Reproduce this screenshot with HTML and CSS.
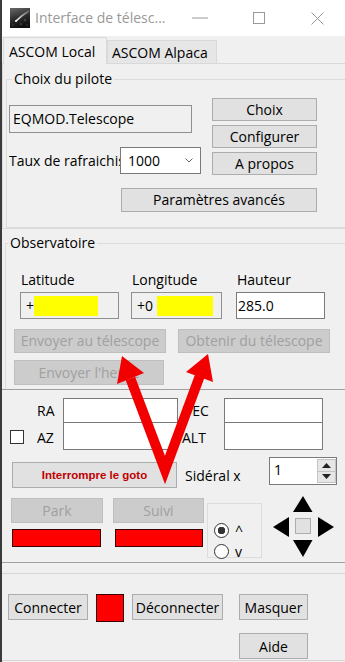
FILE: index.html
```html
<!DOCTYPE html>
<html lang="fr">
<head>
  <meta charset="UTF-8">
  <title>Interface de télescope</title>
  <link rel="stylesheet" href="styles.css">
</head>
<body>
  <div class="titlebar">
    <svg class="app-icon" viewBox="0 0 20 20">
      <defs>
        <linearGradient id="sky" x1="0" y1="0" x2="0.3" y2="1">
          <stop offset="0" stop-color="#6a6a6a"/>
          <stop offset="0.6" stop-color="#2a2a2a"/>
          <stop offset="1" stop-color="#111"/>
        </linearGradient>
        <linearGradient id="tail" x1="1" y1="0" x2="0" y2="1">
          <stop offset="0" stop-color="#fff" stop-opacity="0.2"/>
          <stop offset="1" stop-color="#fff" stop-opacity="1"/>
        </linearGradient>
      </defs>
      <rect width="20" height="20" fill="url(#sky)"/>
      <path d="M19 3 Q12 7 6 13" stroke="url(#tail)" stroke-width="1.6" fill="none"/>
      <circle cx="6" cy="13" r="1" fill="#fff"/>
      <circle cx="15" cy="12" r="0.5" fill="#ddd"/>
      <circle cx="11" cy="16" r="0.5" fill="#ccc"/>
      <circle cx="3" cy="17" r="0.4" fill="#bbb"/>
      <circle cx="17" cy="17" r="0.4" fill="#bbb"/>
    </svg>
    <span class="title">Interface de télesc...</span>
    <div class="caption">
      <span><svg width="16" height="2"><rect y="0.5" width="16" height="1" fill="#999"/></svg></span>
      <span><svg width="12" height="12"><rect x="0.5" y="0.5" width="11" height="11" fill="none" stroke="#999"/></svg></span>
      <span><svg width="13" height="13"><path d="M0.5 0.5 L12.5 12.5 M12.5 0.5 L0.5 12.5" stroke="#999"/></svg></span>
    </div>
  </div>

  <div class="tabs">
    <div class="tab active">ASCOM Local</div>
    <div class="tab">ASCOM Alpaca</div>
  </div>

  <div class="pane">
    <fieldset class="group pilote">
      <legend>Choix du pilote</legend>
      <div class="pilote-grid">
        <div>
          <div class="field ro driver">EQMOD.Telescope</div>
          <div class="rate-row">
            <span class="rate-label">Taux de rafraichis</span>
            <div class="combo">
              <span>1000</span>
              <svg width="8" height="5"><path d="M0.5 0.5 L4 4 L7.5 0.5" stroke="#666" fill="none"/></svg>
            </div>
          </div>
        </div>
        <div class="pilote-btns">
          <button class="btn">Choix</button>
          <button class="btn">Configurer</button>
          <button class="btn">A propos</button>
        </div>
      </div>
      <button class="btn advanced">Paramètres avancés</button>
    </fieldset>
  </div>

  <fieldset class="group obs">
    <legend>Observatoire</legend>
    <div class="obs-grid">
      <span class="obs-label">Latitude</span>
      <span class="obs-label">Longitude</span>
      <span class="obs-label">Hauteur</span>
      <div class="field ro lat">+<span class="mask lat-mask"></span></div>
      <div class="field ro lon">+0<span class="mask lon-mask"></span></div>
      <div class="field alt-box">285.0</div>
    </div>
    <div class="send-row">
      <button class="btn off">Envoyer au télescope</button>
      <button class="btn off">Obtenir du télescope</button>
    </div>
    <button class="btn off heure">Envoyer l'heure</button>
  </fieldset>

  <div class="lower">
    <div class="coords">
      <span></span>
      <span class="c-label ra">RA</span>
      <div class="field coord top"></div>
      <span class="c-label dec">DEC</span>
      <div class="field coord top"></div>
      <span class="check"></span>
      <span class="c-label ra">AZ</span>
      <div class="field coord bottom"></div>
      <span class="c-label dec">ALT</span>
      <div class="field coord bottom"></div>
    </div>

    <div class="goto-row">
      <button class="btn stop">Interrompre le goto</button>
      <span class="sideral">Sidéral x</span>
      <div class="spin">
        <span class="spin-val">1</span>
        <div class="spin-btns">
          <span><svg width="9" height="5"><path d="M0 5 L4.5 0 L9 5 Z" fill="#222"/></svg></span>
          <span><svg width="9" height="5"><path d="M0 0 L4.5 5 L9 0 Z" fill="#222"/></svg></span>
        </div>
      </div>
    </div>

    <div class="ctl-row">
      <div class="state park">
        <button class="btn off">Park</button>
        <span class="led"></span>
      </div>
      <div class="state suivi">
        <button class="btn off">Suivi</button>
        <span class="led"></span>
      </div>
      <div class="radios">
        <div class="radio-row"><span class="radio checked"></span><span>^</span></div>
        <div class="radio-row"><span class="radio"></span><span>v</span></div>
      </div>
      <svg class="dpad" width="61" height="62" viewBox="0 0 61 62">
        <path d="M30 0 L39.5 16 L20 16 Z" fill="#000"/>
        <path d="M0 31 L16 21 L16 41 Z" fill="#000"/>
        <path d="M61 31 L45 21 L45 41 Z" fill="#000"/>
        <path d="M30 61 L20 44 L39.5 44 Z" fill="#000"/>
        <rect x="22.5" y="22.5" width="15" height="15" fill="#e1e1e1" stroke="#adadad"/>
      </svg>
    </div>
  </div>

  <div class="sep"></div>

  <div class="bottom-row">
    <button class="btn connect">Connecter</button>
    <span class="conn-led"></span>
    <button class="btn disconnect">Déconnecter</button>
    <button class="btn hide">Masquer</button>
  </div>
  <button class="btn help">Aide</button>
  <div class="sep last"></div>

  <svg class="arrows" width="345" height="662" viewBox="0 0 345 662">
    <polyline points="130.4,378.4 165,470 199.6,376.5" fill="none" stroke="#f20000" stroke-width="10" stroke-linejoin="miter" stroke-miterlimit="10"/>
    <path d="M122 356 L144 373 L117 384 Z" fill="#f20000"/>
    <path d="M208 354 L213 382 L186 372 Z" fill="#f20000"/>
  </svg>
</body>
</html>
```

FILE: styles.css
```css
body {
  margin: 0;
  width: 343px;
  height: 662px;
  overflow: hidden;
  position: relative;
  background: #f0f0f0;
  border-left: 2px solid #3b3b3b;
  font-family: "Open Sans", sans-serif;
  font-size: 14px;
  color: #000;
}
button {
  font-family: inherit;
  font-size: 14px;
  padding: 0;
  margin: 0;
}
.titlebar {
  height: 36px;
  background: #fff;
  display: flex;
  align-items: center;
}
.app-icon {
  width: 20px;
  height: 20px;
  margin-left: 8px;
}
.title {
  margin-left: 5px;
  color: #999;
  line-height: 20px;
}
.caption {
  margin-left: auto;
  margin-right: -2px;
  display: flex;
}
.caption span {
  width: 59px;
  height: 36px;
  display: flex;
  align-items: center;
  justify-content: center;
}
.tabs {
  display: flex;
  align-items: flex-end;
  height: 26px;
  margin-top: 1px;
  padding-left: 1px;
}
.tab {
  box-sizing: border-box;
  height: 23px;
  width: 110px;
  border: 1px solid #d9d9d9;
  border-bottom: none;
  background: #e6e6e6;
  padding: 1px 0 0 4px;
  line-height: 22px;
}
.tab.active {
  width: 104px;
  height: 27px;
  margin-bottom: -1px;
  padding: 3px 0 0 5px;
  background: #f0f0f0;
  position: relative;
  z-index: 1;
}
.pane {
  height: 164px;
  width: 350px;
  border: 1px solid #d9d9d9;
  border-right: none;
}
.group {
  border: 1px solid #dcdcdc;
  min-width: 0;
  box-sizing: border-box;
}
.group legend {
  line-height: 18px;
  padding: 0 2px;
}
.pilote {
  width: 340px;
  height: 158px;
  margin: 6px 0 0 3px;
  padding: 10px 0 0 2px;
}
.pilote legend {
  margin-left: 3px;
}
.pilote-grid {
  display: grid;
  grid-template-columns: 192px 105px;
  column-gap: 11px;
}
.field {
  box-sizing: border-box;
  border: 1px solid #7a7a7a;
  background: #fff;
  white-space: nowrap;
  overflow: hidden;
}
.field.ro {
  background: #f0f0f0;
  border-color: #8f8f8f;
}
.driver {
  margin-top: 7px;
  width: 183px;
  height: 28px;
  padding-left: 3px;
  line-height: 26px;
}
.rate-row {
  display: flex;
  align-items: center;
  height: 27px;
  margin-top: 14px;
}
.rate-label {
  width: 111px;
  overflow: hidden;
  white-space: nowrap;
}
.combo {
  box-sizing: border-box;
  width: 81px;
  height: 27px;
  border: 1px solid #7a7a7a;
  background: #fff;
  display: flex;
  align-items: center;
  justify-content: space-between;
  padding: 0 7px;
}
.pilote-btns {
  display: flex;
  flex-direction: column;
  gap: 4px;
}
.btn {
  box-sizing: border-box;
  height: 23px;
  background: #e1e1e1;
  border: 1px solid #adadad;
  color: #000;
  line-height: 20px;
  text-align: center;
  white-space: nowrap;
}
.btn.off {
  background: #cccccc;
  border-color: #bfbfbf;
  color: #a0a0a0;
}
.advanced {
  display: block;
  width: 196px;
  height: 24px;
  margin: 13px 0 0 112px;
}
.obs {
  width: 350px;
  height: 155px;
  margin: 5px 0 0 3px;
  padding: 0 0 0 2px;
  border-bottom: none;
  border-right: none;
}
.obs legend {
  margin-left: 0;
}
.obs-grid {
  display: grid;
  grid-template-columns: 111px 105px 89px;
  margin: 19px 0 0 12px;
  row-gap: 3px;
}
.obs-label {
  line-height: 18px;
  padding-left: 1px;
}
.obs-grid .field {
  height: 27px;
  line-height: 25px;
  padding-left: 5px;
}
.lat {
  width: 99px;
}
.lon {
  width: 91px;
}
.obs-grid .alt-box {
  width: 89px;
  padding-left: 1px;
}
.mask {
  display: inline-block;
  height: 20px;
  background: #ffff00;
  vertical-align: -5px;
}
.lat-mask {
  width: 64px;
  margin-left: 0;
}
.lon-mask {
  width: 56px;
  margin-left: 4px;
}
.send-row {
  display: grid;
  grid-template-columns: 152px 152px;
  column-gap: 12px;
  margin: 10px 0 0 6px;
}
.send-row .btn {
  height: 24px;
}
.heure {
  display: block;
  width: 150px;
  height: 25px;
  margin: 7px 0 0 6px;
}
.lower {
  height: 172px;
  border-top: 1px solid #a0a0a0;
  border-bottom: 1px solid #a0a0a0;
}
.coords {
  display: grid;
  grid-template-columns: 14px 39px 115px 46px 99px;
  grid-template-rows: 25px 28px;
  margin: 8px 0 0 8px;
  align-items: center;
}
.c-label.ra {
  padding-left: 13px;
}
.c-label.dec {
  padding-left: 4px;
}
.coord {
  align-self: start;
}
.coord.top {
  height: 26px;
}
.coord.bottom {
  height: 28px;
  margin-top: -1px;
}
.check {
  box-sizing: border-box;
  width: 14px;
  height: 14px;
  border: 1px solid #333;
  background: #fff;
}
.goto-row {
  display: grid;
  grid-template-columns: 165px 92px 68px;
  align-items: start;
  height: 37px;
  padding-left: 10px;
}
.stop {
  height: 26px;
  margin-top: 11px;
  font-family: "Liberation Sans", Arial, sans-serif;
  font-size: 11.5px;
  font-weight: bold;
  color: #c00000;
}
.sideral {
  margin-top: 16px;
  padding-left: 8px;
  line-height: 18px;
}
.spin {
  box-sizing: border-box;
  height: 28px;
  margin-top: 6px;
  border: 1px solid #7a7a7a;
  background: #fff;
  display: flex;
  justify-content: space-between;
}
.spin-val {
  padding-left: 4px;
  line-height: 24px;
}
.spin-btns {
  display: flex;
  flex-direction: column;
  width: 19px;
  margin: 1px 0 1px 0;
}
.spin-btns span {
  flex: 1;
  display: flex;
  align-items: center;
  justify-content: center;
  background: #e6e6e6;
  border: 1px solid #c4c4c4;
}
.spin-btns span + span {
  border-top: none;
}
.ctl-row {
  display: flex;
  align-items: flex-start;
  margin-top: 10px;
  padding-left: 9px;
}
.state {
  display: flex;
  flex-direction: column;
}
.state .btn {
  height: 25px;
}
.led {
  height: 18px;
  margin-top: 6px;
  box-sizing: border-box;
  background: #ff0000;
  border: 1px solid #3a0000;
}
.park .btn {
  width: 92px;
}
.park .led {
  width: 89px;
  margin-left: 1px;
}
.suivi {
  margin-left: 10px;
}
.suivi .btn {
  width: 91px;
}
.suivi .led {
  width: 88px;
  margin-left: 2px;
}
.radios {
  box-sizing: border-box;
  width: 55px;
  height: 55px;
  margin: 5px 0 0 3px;
  padding: 16px 0 0 6px;
  border: 1px solid #dcdcdc;
}
.radio-row {
  display: flex;
  align-items: center;
  gap: 6px;
  height: 21px;
  line-height: 15px;
}
.radio {
  box-sizing: border-box;
  width: 15px;
  height: 15px;
  border: 1px solid #333;
  border-radius: 50%;
  background: #fff;
}
.radio.checked {
  background: radial-gradient(circle, #333 0 3.5px, #fff 4px);
}
.dpad {
  margin: -2px 0 0 11px;
}
.sep {
  margin-top: 10px;
  border-top: 1px solid #d6d6d6;
}
.sep.last {
  margin-top: 1px;
}
.bottom-row {
  display: flex;
  align-items: flex-start;
  margin-top: 20px;
  padding-left: 6px;
}
.bottom-row .btn,
.help {
  height: 26px;
  line-height: 23px;
}
.connect {
  width: 80px;
}
.conn-led {
  box-sizing: border-box;
  width: 28px;
  height: 28px;
  margin-left: 8px;
  background: #ff0000;
  border: 1px solid #3a0000;
}
.disconnect {
  width: 91px;
  margin-left: 8px;
}
.hide {
  width: 69px;
  margin-left: 16px;
}
.help {
  display: block;
  width: 69px;
  margin: 11px 0 0 237px;
}
.arrows {
  position: absolute;
  left: -2px;
  top: 0;
  pointer-events: none;
}
```
